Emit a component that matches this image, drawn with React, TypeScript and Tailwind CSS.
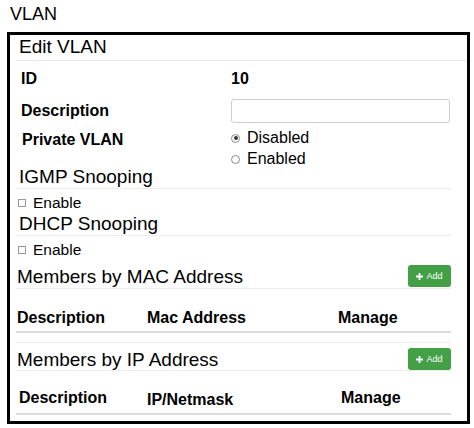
import React from "react";

const AddButton = () => (
  <button className="flex h-[22px] w-[43px] items-center justify-center gap-[3px] rounded-[3px] bg-[#43a047] text-[9px] leading-none text-white">
    <svg width="7" height="7" viewBox="0 0 7 7">
      <path d="M3.5 0v7M0 3.5h7" stroke="white" strokeWidth="1.8" />
    </svg>
    <span>Add</span>
  </button>
);

const Radio = ({ checked, label }: { checked?: boolean; label: string }) => (
  <div className="flex h-[20px] items-center">
    <span className="flex h-[9px] w-[9px] items-center justify-center rounded-full border border-[#8a8a8a] bg-white">
      {checked && <span className="h-[4px] w-[4px] rounded-full bg-[#333]" />}
    </span>
    <span className="ml-[7px]">{label}</span>
  </div>
);

const Check = ({ label }: { label: string }) => (
  <div className="flex h-[20px] items-center text-[15.5px] leading-[20px]">
    <span className="ml-[2px] h-[8px] w-[8px] border border-[#999] bg-white" />
    <span className="ml-[7px]">{label}</span>
  </div>
);

const App = () => {
  return (
    <div className="h-[428px] w-[474px] overflow-hidden bg-white pt-[3px] font-['Liberation_Sans',Arial,sans-serif] text-black">
      <div className="pl-[10px] text-[18px] leading-[22px]">VLAN</div>

      <div className="ml-[7px] mt-[7px] w-[463px] border-[3px] border-black pb-[6px]">
        <div className="ml-[6px] h-[26px] border-b border-[#e8e8e8] pl-[3px] text-[19px] leading-[24px]">
          Edit VLAN
        </div>

        <div className="ml-[6px] mr-[16px]">
          <div className="mt-[8px] flex h-[20px] text-[16px] font-bold leading-[20px]">
            <div className="w-[215px] pl-[5px]">ID</div>
            <div>10</div>
          </div>

          <div className="mt-[10px] flex h-[24px] items-center text-[16px] leading-[20px]">
            <div className="w-[215px] pl-[5px] font-bold">Description</div>
            <input className="h-[24px] w-[219px] rounded-[3px] border border-[#cfcfcf] bg-white px-2 outline-none" />
          </div>

          <div className="mt-[5px] flex items-start text-[16px] leading-[20px]">
            <div className="w-[215px] pl-[6px] pt-[2px] font-bold">Private VLAN</div>
            <div className="flex flex-col gap-[1px]">
              <Radio checked label="Disabled" />
              <Radio label="Enabled" />
            </div>
          </div>

          <div className="-mt-[2px] border-b border-[#ececec] pb-[1px] pl-[3px] text-[19px] leading-[20px]">
            IGMP Snooping
          </div>
          <div className="pt-[4px]">
            <Check label="Enable" />
          </div>

          <div className="mt-[1px] border-b border-[#ececec] pb-[1px] pl-[3px] text-[19px] leading-[20px]">
            DHCP Snooping
          </div>
          <div className="pt-[4px]">
            <Check label="Enable" />
          </div>

          <div className="mt-[1px] flex h-[28px] items-end justify-between border-b border-[#ececec] pb-[1px]">
            <div className="pl-[1px] text-[19px] leading-[20px]">Members by MAC Address</div>
            <AddButton />
          </div>

          <div className="grid grid-cols-[130px_191px_1fr] border-b-2 border-[#dddddd] pb-[3px] pl-[1px] pt-[19px] text-[16px] font-bold leading-[20px]">
            <div>Description</div>
            <div>Mac Address</div>
            <div>Manage</div>
          </div>

          <div className="mt-[9px] flex h-[29px] items-end justify-between border-y border-[#ececec]">
            <div className="pl-[1px] text-[19px] leading-[20px]">Members by IP Address</div>
            <AddButton />
          </div>

          <div className="grid grid-cols-[128px_194px_1fr] border-b-2 border-[#dddddd] pb-[5px] pl-[3px] pt-[17px] text-[16px] font-bold leading-[20px]">
            <div>Description</div>
            <div className="translate-y-[2px]">IP/Netmask</div>
            <div>Manage</div>
          </div>
        </div>
      </div>
    </div>
  );
};

export default App;
